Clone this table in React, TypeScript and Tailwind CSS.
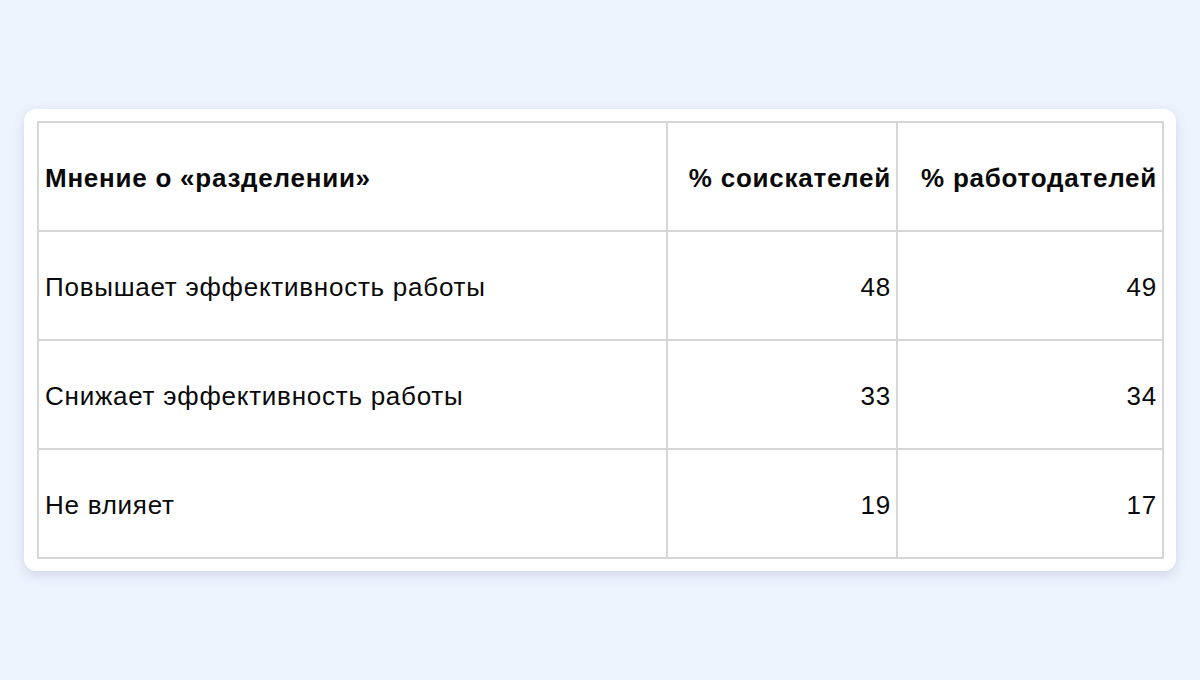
import React from "react";

const rows = [
  { label: "Повышает эффективность работы", seekers: 48, employers: 49 },
  { label: "Снижает эффективность работы", seekers: 33, employers: 34 },
  { label: "Не влияет", seekers: 19, employers: 17 },
];

const cell = "border-2 border-[#d6d6d6] h-[109px] pt-[3px]";

export default function App() {
  return (
    <div
      className="w-[1200px] h-[680px] bg-[#eef4fe] pt-[109px] pl-[24px]"
      style={{ fontFamily: '"Liberation Sans", Arial, sans-serif' }}
    >
      <div className="w-[1152px] bg-white rounded-[12px] shadow-[0_4px_12px_rgba(60,80,120,0.18)] pt-[12px] pb-[12px] pl-[13px] pr-[12px]">
        <table className="w-[1125px] table-fixed border-collapse text-[26px] tracking-[0.75px] text-[#0a0a0a]">
          <colgroup>
            <col className="w-[629px]" />
            <col className="w-[230px]" />
            <col className="w-[266px]" />
          </colgroup>
          <thead>
            <tr>
              <th className={`${cell} pl-[6px] text-left font-bold`}>Мнение о «разделении»</th>
              <th className={`${cell} pr-[5px] text-right font-bold`}>% соискателей</th>
              <th className={`${cell} pr-[5px] text-right font-bold`}>% работодателей</th>
            </tr>
          </thead>
          <tbody>
            {rows.map((r) => (
              <tr key={r.label}>
                <td className={`${cell} pl-[6px] text-left`}>{r.label}</td>
                <td className={`${cell} pr-[5px] text-right`}>{r.seekers}</td>
                <td className={`${cell} pr-[5px] text-right`}>{r.employers}</td>
              </tr>
            ))}
          </tbody>
        </table>
      </div>
    </div>
  );
}
